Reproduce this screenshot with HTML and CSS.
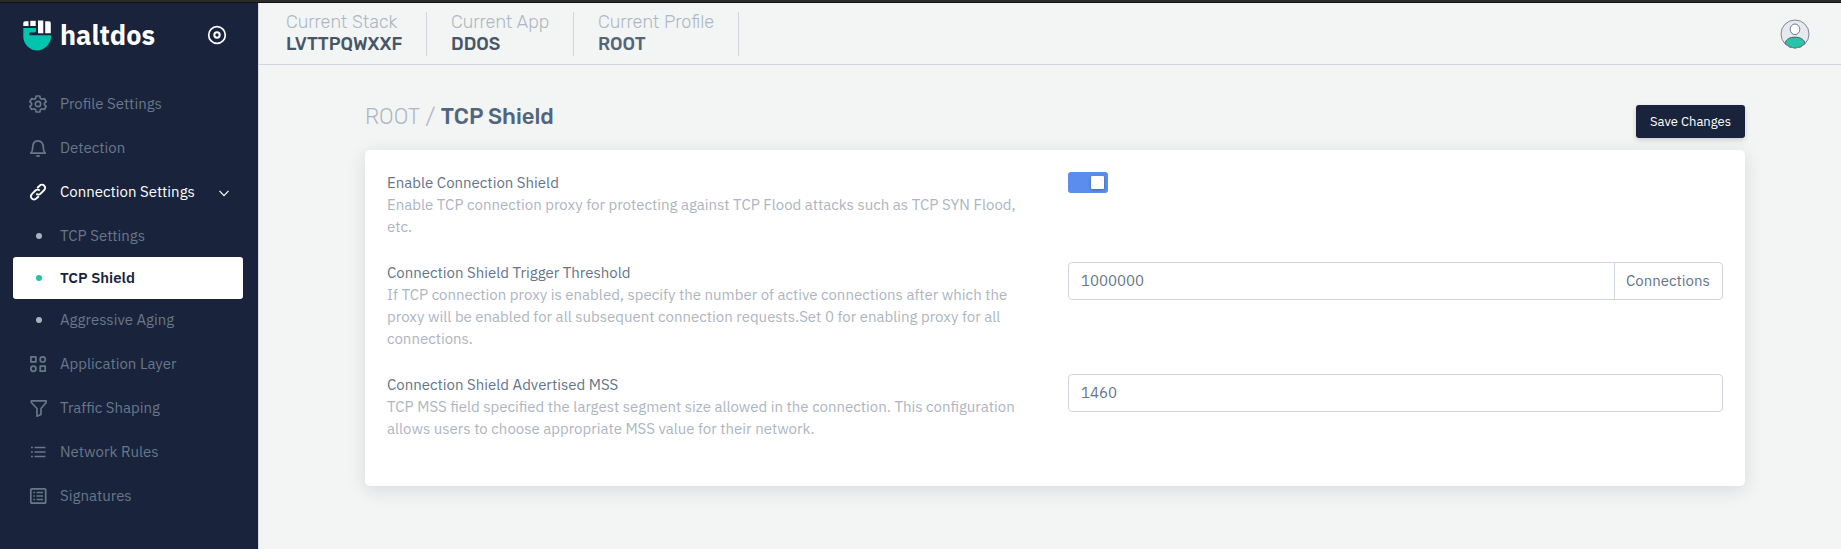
FILE: index.html
```html
<!DOCTYPE html>
<html lang="en">
<head>
<meta charset="utf-8">
<title>TCP Shield</title>
<link rel="stylesheet" href="styles.css">
</head>
<body>
<div class="strip"></div>
<div class="app">
  <aside class="sidebar">
    <div class="brand">
      <svg class="logo" width="28" height="31" viewBox="0 0 28 31">
        <path fill="#00c4ab" d="M.3 8H13V11Q13 12.600 11 12.600H7.500Q6 12.600 6 14T7.500 15.200H28V17C28 24 21 30.500 14 30.500S.3 24 .3 17Z"/>
        <g fill="#fff"><path d="M.3 6V3Q.3 1.300 2 1.300H5.500V6Z"/><path d="M7.300 .8H12.700V6H7.300Z"/><path d="M15 0.500H20.300V13.300H15Z"/><path d="M22.200 1.300H26Q27.800 1.300 27.800 3V13.300H22.200Z"/></g>
      </svg>
      <span class="brand-name">haltdos</span>
      <svg class="pin" width="20" height="20" viewBox="0 0 20 20" fill="none" stroke="#fff"><circle cx="10" cy="10" r="8.3" stroke-width="1.7"/><circle cx="10" cy="10" r="2.7" stroke-width="2"/></svg>
    </div>
    <nav class="menu">
      <a class="item"><svg class="icon" viewBox="0 0 18 18"><path d="M7.2 1h3.6l.6 2.4 1.6.9 2.4-.7 1.8 3.1L15.400 8.300v1.500l1.800 1.600-1.800 3.100-2.400-.7-1.600.9-.6 2.300H7.200l-.6-2.300-1.600-.9-2.400.7L.8 11.400l1.800-1.600V8.300L.8 6.700l1.800-3.100 2.400.7 1.600-.9z"/><circle cx="9" cy="9" r="2.700"/></svg><span class="label">Profile Settings</span></a>
      <a class="item"><svg class="icon" viewBox="0 0 18 18"><path d="M1.800 14.200h14.400Q14.300 12.500 14.300 8.500C14.300 4.500 12.500 1.800 9 1.800S3.700 4.500 3.700 8.500Q3.700 12.500 1.800 14.200z"/><path d="M7.200 17h3.600"/></svg><span class="label">Detection</span></a>
      <a class="item open"><svg class="icon link" viewBox="0 0 18 18"><path d="M8.200 5L10.700 2.700a2.900 2.900 0 0 1 4.500 0a2.900 2.900 0 0 1 0 4.300l-3.600 3.700a2.900 2.900 0 0 1-4.300-.1M9.800 13.200L7.300 15.500a2.900 2.900 0 0 1-4.500 0a2.900 2.900 0 0 1 0-4.300l3.600-3.700a2.900 2.900 0 0 1 4.300 .1"/></svg><span class="label">Connection Settings</span><svg class="chevron" width="10" height="7" viewBox="0 0 10 7"><path d="M.5 .8L5 5.600 9.500 .8"/></svg></a>
      <div class="submenu">
        <a class="sub"><i class="dot"></i><span class="label">TCP Settings</span></a>
        <a class="sub active"><i class="dot"></i><span class="label">TCP Shield</span></a>
        <a class="sub"><i class="dot"></i><span class="label">Aggressive Aging</span></a>
      </div>
      <a class="item"><svg class="icon" viewBox="0 0 18 18"><path d="M1.900 1.900h5v5h-5zM11.200 11.200h5v5h-5z"/><circle cx="13.700" cy="4.400" r="2.600"/><circle cx="4.400" cy="13.700" r="2.600"/></svg><span class="label">Application Layer</span></a>
      <a class="item"><svg class="icon" viewBox="0 0 18 18"><path d="M2.300 1.800h14.900v1.700L12 9.500v6L8 17.200V9.500L2.300 3.500z"/></svg><span class="label">Traffic Shaping</span></a>
      <a class="item"><svg class="icon" viewBox="0 0 18 18"><path d="M5.500 4.500h11M5.500 9h11M5.500 13.500h11M2 4.500h1.900M2 9h1.900M2 13.500h1.900"/></svg><span class="label">Network Rules</span></a>
      <a class="item"><svg class="icon" viewBox="0 0 18 18"><rect x="1.800" y="1.800" width="14.900" height="14.400" rx="1"/><path d="M7.500 5.500h6.500M7.500 9h6.500M7.500 12.500h6.500M4.300 5.500h1.700M4.300 9h1.700M4.300 12.500h1.700"/></svg><span class="label">Signatures</span></a>
    </nav>
  </aside>
  <main class="main">
    <header class="topbar">
      <div class="ctx stack"><span class="ctx-label">Current Stack</span><b class="ctx-value">LVTTPQWXXF</b></div>
      <div class="ctx appname"><span class="ctx-label">Current App</span><b class="ctx-value">DDOS</b></div>
      <div class="ctx profile"><span class="ctx-label">Current Profile</span><b class="ctx-value light">ROOT</b></div>
      <svg class="avatar" width="30" height="30" viewBox="0 0 30 30"><circle cx="15" cy="15" r="14" fill="#e6e9ee"/><path d="M5 24.500C6 20 10 18.200 15 18.200S24 20 25 24.500Q21 29 15 29T5 24.500Z" fill="#29c4a9" stroke="#40606f"/><ellipse cx="15" cy="10.300" rx="4.800" ry="5.300" fill="#fff" stroke="#707b90"/><circle cx="15" cy="15" r="14" fill="none" stroke="#7c8799"/></svg>
    </header>
    <section class="content">
      <div class="heading">
        <h1 class="title"><span class="crumb">ROOT /</span> <span class="page">TCP Shield</span></h1>
        <button class="save">Save Changes</button>
      </div>
      <div class="card">
        <div class="row">
          <div class="info"><div class="name">Enable Connection Shield</div><p class="desc">Enable TCP connection proxy for protecting against TCP Flood attacks such as TCP SYN Flood,<br>etc.</p></div>
          <div class="control"><span class="toggle"><i class="knob"></i></span></div>
        </div>
        <div class="row">
          <div class="info"><div class="name">Connection Shield Trigger Threshold</div><p class="desc">If TCP connection proxy is enabled, specify the number of active connections after which the<br>proxy will be enabled for all subsequent connection requests.Set 0 for enabling proxy for all<br>connections.</p></div>
          <div class="control"><div class="field"><span class="value">1000000</span><span class="unit">Connections</span></div></div>
        </div>
        <div class="row">
          <div class="info"><div class="name">Connection Shield Advertised MSS</div><p class="desc">TCP MSS field specified the largest segment size allowed in the connection. This configuration<br>allows users to choose appropriate MSS value for their network.</p></div>
          <div class="control"><div class="field"><span class="value">1460</span></div></div>
        </div>
      </div>
    </section>
  </main>
</div>
</body>
</html>
```
FILE: styles.css
```css
* { box-sizing: border-box; }
body { margin: 0; height: 549px; overflow: hidden; background: #f3f5f4; color: #647489; font: 15px/22px "IBM Plex Sans", Roboto, sans-serif; white-space: nowrap; }
.strip { height: 3px; background: #2b2b2c; border-bottom: 1px solid #111; }
.app { display: flex; height: 546px; }
.sidebar { width: 259px; flex: none; background: #19233b; border-right: 1px solid #d5dadd; }
.brand { display: flex; align-items: center; height: 64px; padding: 0 31px 0 23px; }
.logo { flex: none; }
.brand-name { margin-left: 9px; color: #fff; font: 700 27px/32px "IBM Plex Sans", "Noto Sans", sans-serif; }
.pin { margin-left: auto; }
.menu { display: flex; flex-direction: column; gap: 2px; padding: 16px 15px 0 13px; }
.item, .sub { display: flex; align-items: center; height: 42px; padding-left: 16px; color: #69778a; }
.icon { width: 18px; height: 18px; flex: none; fill: none; stroke: currentColor; stroke-width: 1.7; stroke-linejoin: round; }
.link { stroke-width: 1.9; }
.label { margin-left: 13px; }
.open { color: #fff; }
.chevron { margin: 3px 14px 0 auto; fill: none; stroke: #fff; stroke-width: 1.2; }
.sub { padding-left: 23px; border-radius: 3px; }
.dot { width: 6px; height: 6px; border-radius: 50%; background: #a9b2bf; }
.sub .label { margin-left: 18px; }
.active { background: #fff; color: #19233b; font-weight: 600; }
.active .dot { background: #22c3a0; }
.main { flex: 1; }
.topbar { display: flex; height: 62px; padding: 9px 31px 8px 27px; border-bottom: 1px solid #d1d6de; }
.ctx { display: flex; flex-direction: column; height: 44px; border-right: 1px solid #d1d6de; margin-right: 24px; }
.stack { width: 141px; }
.appname { width: 123px; }
.profile { width: 141px; }
.ctx-label { color: #adb7c4; font: 300 18px/21px Rubik, Roboto, sans-serif; }
.ctx-value { color: #475666; font: 500 18px/22px Rubik, Roboto, sans-serif; }
.light { color: #52657c; }
.avatar { margin: 7px 0 0 auto; }
.content { padding: 40px 96px 0 106px; }
.heading { display: flex; justify-content: space-between; height: 45px; }
.title { margin: 0; font: 500 22px/24px Rubik, Roboto, sans-serif; color: #52657c; }
.crumb { margin-right: 1px; color: #adb7c4; font-weight: 300; }
.save { width: 109px; height: 33px; padding: 0; border: 0; border-radius: 3px; background: #19233b; color: #fff; font: 13px/20px "IBM Plex Sans", Roboto, sans-serif; box-shadow: 0 2px 5px rgba(25,34,58,.18); }
.card { display: flex; flex-direction: column; gap: 24px; height: 336px; padding: 22px; border-radius: 5px; background: #fff; box-shadow: 0 4px 18px rgba(30,40,70,.13); }
.row { display: flex; }
.info { width: 681px; }
.name { color: #647489; }
.desc { margin: 0; color: #adb5bf; }
.control { flex: 1; }
.toggle { display: flex; justify-content: flex-end; width: 40px; height: 21px; padding: 4px; border-radius: 3px; background: #5b8dee; }
.knob { width: 13px; height: 13px; border-radius: 1px; background: #fff; box-shadow: 0 1px 3px rgba(0,0,0,.3); }
.field { display: flex; height: 38px; border: 1px solid #d1d6de; border-radius: 4px; line-height: 36px; }
.value { flex: 1; padding-left: 12px; }
.unit { width: 108px; padding-left: 11px; border-left: 1px solid #d1d6de; }
```
